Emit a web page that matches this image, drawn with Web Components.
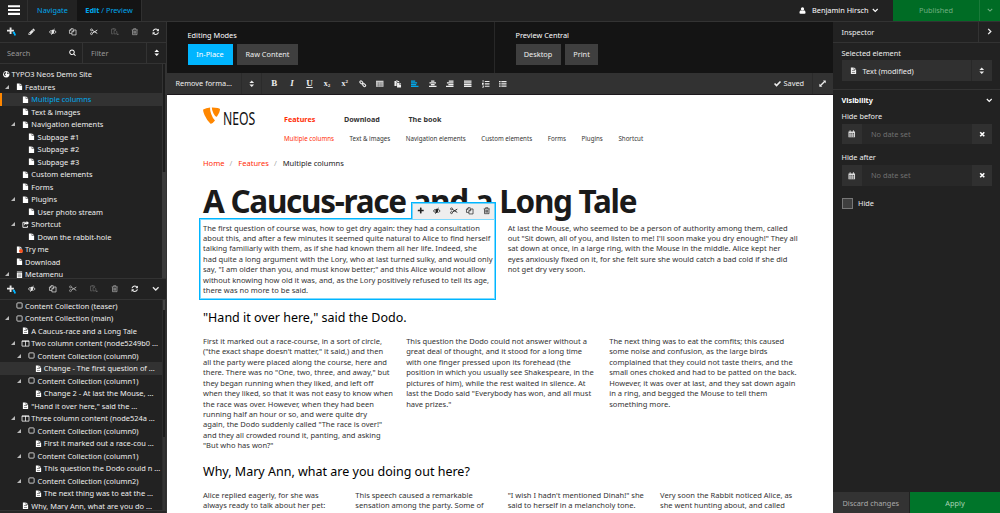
<!DOCTYPE html>
<html lang="en"><head><meta charset="utf-8"><title>Neos</title>
<style>
html,body{margin:0;height:100%;overflow:hidden;background:#222}
body{font-family:"Noto Sans","Open Sans",sans-serif;font-size:7.35px;color:#fff}
</style></head><body><neos-app></neos-app>
<script>
const I={
plus:'<path transform="scale(.00893)" d="M1600 736v192q0 40-28 68t-68 28h-416v416q0 40-28 68t-68 28h-192q-40 0-68-28t-28-68v-416h-416q-40 0-68-28t-28-68v-192q0-40 28-68t68-28h416v-416q0-40 28-68t68-28h192q40 0 68 28t28 68v416h416q40 0 68 28t28 68z"/>',
add:'<path d="M5 1h3.500v4H13v3.500H8.500V13H5V8.500H0V5h5z"/><path fill="#00b5ff" d="M11 9h4v3h1.500v4H13v-3.500h-2z"/>',
pencil:'<path transform="scale(.00893)" d="M491 1536l91-91-235-235-91 91v107h128v128h107zm469-1120l416 416-832 832h-416v-416zm683 96q0 53-37 90l-166 166-416-416 166-165q36-38 90-38 53 0 91 38l235 234q37 39 37 91z"/>',
eye:'<path fill-rule="evenodd" d="M0 8.500Q3 3.500 8 3.500T16 8.500Q13 13 8 13T0 8.500zM2 8.500Q4 11.500 6 11.700Q3.800 8 6.200 5Q3.500 6 2 8.500zM10 5Q12 7 10.600 10.200Q9 12 7.500 11.700Q12 12 14.200 8.500Q12.500 6 10 5z"/><path d="M11.500 1.500L5 14.500" stroke="currentColor" stroke-width="1.600"/>',
copy:'<path fill="none" stroke="currentColor" stroke-width="1.500" d="M6 11.500H1V5l3.500-3.500H9V4M1 5h3.500V1.500M6.200 8L10 4.200h5v10.600H6.200zM6.200 8H10V4.200"/>',
cut:'<g fill="none" stroke="currentColor"><circle cx="3.200" cy="4" r="2.100" stroke-width="1.600"/><circle cx="3.200" cy="12" r="2.100" stroke-width="1.600"/><path stroke-width="2" d="M5 5l10.500 6.500M5 11l10.500-6.500"/></g>',
paste:'<path fill-rule="evenodd" d="M1 2h3V.8h4V2h3v2.500H7L5.500 6v7H1zM4.500 2v1.300h3V2zM6.500 6H11v3.500h4V16H6.500zM12 5.500l3.300 3H12z"/>',
pasteoff:'<path fill="none" stroke="currentColor" stroke-width="1.600" d="M5 12.500H1.200V2.200H10V4.500M3.500 1.500h4M6.500 5.500H10l2.500 2.500v4.500h-6z"/><path d="M13 12h3v3h-3z"/>',
trash:'<path fill="none" stroke="currentColor" stroke-width="1.500" d="M1.500 4h13M3.200 4.500V14.200h9.600V4.500M5.500 3.500V1.500h5v2M6 6.500v5.500M8 6.500v5.500M10 6.500v5.500"/>',
refresh:'<path transform="scale(.00893)" d="M1639 1056q0 5-1 7-64 268-268 434.500t-478 166.500q-146 0-282.500-55t-243.500-157l-129 129q-19 19-45 19t-45-19-19-45v-448q0-26 19-45t45-19h448q26 0 45 19t19 45-19 45l-137 137q71 66 161 102t187 36q134 0 250-65t186-179q11-17 53-117 8-23 30-23h192q13 0 22.500 9.500t9.500 22.500zm25-800v448q0 26-19 45t-45 19h-448q-26 0-45-19t-19-45 19-45l138-138q-148-137-349-137-134 0-250 65t-186 179q-11 17-53 117-8 23-30 23h-199q-13 0-22.500-9.500t-9.500-22.500v-7q65-268 270-434.500t480-166.500q146 0 284 55.500t245 156.500l130-129q19-19 45-19t45 19 19 45z"/>',
search:'<path transform="scale(.00893)" d="M1216 832q0-185-131.500-316.500t-316.500-131.500-316.500 131.500-131.500 316.500 131.500 316.500 316.500 131.500 316.500-131.500 131.500-316.500zm512 832q0 52-38 90t-90 38q-54 0-90-38l-343-342q-179 124-399 124-143 0-273.500-55.500t-225-150-150-225-55.500-273.500 55.500-273.500 150-225 225-150 273.500-55.500 273.500 55.500 225 150 150 225 55.500 273.500q0 220-124 399l343 343q37 37 37 90z"/>',
sort:'<path d="M3 6.500L8 1l5 5.500zM3 9.500h10L8 15z"/>',
down:'<path fill="none" stroke="currentColor" stroke-width="2.800" d="M2 5l6 5.800L14 5"/>',
right:'<path fill="none" stroke="currentColor" stroke-width="3" d="M5 2l6 6-6 6"/>',
user:'<circle cx="8" cy="4.600" r="3.800"/><path d="M4.500 7.500Q8 10 11.500 7.500Q15 8 15 13Q15 15.500 12.500 15.500h-9Q1 15.500 1 13Q1 8 4.500 7.500z"/>',
menu:'<path d="M0 1.500h16v2.800H0zM0 6.600h16v2.800H0zM0 11.700h16v2.800H0z"/>',
file:'<path d="M2 1h6.500v5H14v10H2zM9.500 1L14 5H9.500z"/>',
text:'<path fill-rule="evenodd" d="M2 1h6.500v5H14v10H2zM9.500 1L14 5H9.500zM4.500 8v1.200h7V8zM4.500 11.500v1.200h7v-1.200z"/>',
folder:'<path d="M2 1h12v1.700H2zM2 4h12v12H2z"/><path stroke="#222" stroke-width=".9" d="M4 7h8M4 10h8M4 13h8"/>',
globe:'<path fill-rule="evenodd" d="M8 0a8 8 0 1 0 .01 0zM3 4l3-1.500 2 1.500-2 2.500H4L5 9l2 1-1 3Q2 11 2 7zM11 3q3 1 3 4l-2 1-2-2z"/>',
square:'<rect x="2" y="2" width="12" height="12" rx="2" fill="none" stroke="currentColor" stroke-width="1.700"/>',
cols:'<path fill="none" stroke="currentColor" stroke-width="1.700" d="M0 2h16v12H0zM8 2v12M0 3h16"/>',
share:'<path fill="none" stroke="currentColor" stroke-width="2" d="M8 3H2v11.500h10.500V11"/><path d="M10.500 0L16 4.500 10.500 9V6.500Q6 6.500 5.500 10.500Q3 3 10.500 3z"/>',
link:'<g fill="none" stroke="currentColor" stroke-width="2.400"><rect x="-3.500" y="-2.300" width="7" height="4.600" rx="2" transform="translate(5 5) rotate(45)"/><rect x="-3.500" y="-2.300" width="7" height="4.600" rx="2" transform="translate(11 11) rotate(45)"/></g>',
table:'<path fill="#ccc" d="M0 1.500h16v13H0z"/><path stroke="#555" stroke-width=".8" d="M1 6h14M1 9h14M1 12h14M5.500 5v9M10.500 5v9"/>',
left:'<path d="M0 1h9v2.600H0zM0 4.800h13v2.600H0zM0 8.600h11v2.600H0zM0 12.400h16V15H0z"/>',
center:'<path d="M4.500 1h7v2.600h-7zM1 4.800h14v2.600H1zM4 8.600h8v2.600H4zM0 12.400h16V15H0z"/>',
rightal:'<path d="M6 1h10v2.600H6zM2 4.800h14v2.600H2zM5 8.600h11v2.600H5zM0 12.400h16V15H0z"/>',
justify:'<path d="M0 1h16v2.600H0zM0 4.800h16v2.600H0zM0 8.600h16v2.600H0zM0 12.400h16V15H0z"/>',
ol:'<path d="M6 2h10v2.400H6zM6 7h10v2.400H6zM6 12h10v2.400H6zM1.500 0H3v4.500H1.500zM0 6h4v1.500L2 9h2v1H0zM0 11.500h4V16H0v-1h2.500v-.7H1v-1h1.500v-.8H0z"/>',
ul:'<path d="M5 2h11v2.700H5zM5 6.800h11v2.700H5zM5 11.600h11v2.700H5zM0 2h3.500v2.700H0zM0 6.800h3.500v2.700H0zM0 11.600h3.500v2.700H0z"/>',
check:'<path fill="none" stroke="currentColor" stroke-width="3.800" d="M1.300 8l4.500 4.500L14.800 3.500"/>',
expand:'<path d="M9 1h6.500v6.500L13.300 5.300 5.200 13 7.500 15.500H.8V8.700L3 11 11.200 3z"/>',
cal:'<path fill-rule="evenodd" d="M1 3h2.500V.5h2V3h5V.5h2V3H15v12.500H1zM3 7v1.500h2.500V7zM6.800 7v1.500h2.500V7zM10.500 7v1.500H13V7zM3 9.700v1.500h2.500V9.700zM6.800 9.700v1.500h2.500V9.700zM10.500 9.700v1.500H13V9.700zM3 12.500v1.300h2.500v-1.300zM6.800 12.500v1.300h2.500v-1.300zM10.500 12.500v1.300H13v-1.300z"/>',
x:'<path fill="none" stroke="currentColor" stroke-width="4" d="M3 3l10 10M13 3L3 13"/>'};
const def=(n,css,html)=>customElements.define(n,class extends HTMLElement{connectedCallback(){
 if(this.shadowRoot)return;
 this.attachShadow({mode:'open'}).innerHTML=`<style>*{box-sizing:border-box}${css}</style>${typeof html=='function'?html(this):html}`}});
const ic=(n,s=7.5,c='')=>`<neos-icon name="${n}" size="${s}"${c?` style="color:${c}"`:''}></neos-icon>`;

def('neos-icon',`:host{display:inline-flex;flex:none}svg{display:block;fill:currentColor;overflow:visible}`,
 e=>{const s=e.getAttribute('size')||8;return `<svg width="${s}" height="${s}" viewBox="0 0 16 16">${I[e.getAttribute('name')]}</svg>`});

def('neos-header',`:host{display:flex;height:21.500px;background:#222;border-bottom:1px solid #333;align-items:stretch}
div{display:flex;align-items:center;justify-content:center}
.m{width:28px;border-right:1px solid #303030}.n{width:49px;color:#00a8ec}.e{width:65px;background:#141414;color:#00a8ec;border-right:1px solid #303030;white-space:pre}
.s{flex:1}.u{gap:6px;width:94px;justify-content:flex-start}.p{width:86px;background:#006c25;color:#6fae80}.d{width:21px;background:#006c25;border-left:1px solid #1a7a3a;color:#6fae80}`,
`<div class="m">${ic('menu',12)}</div><div class="n">Navigate</div><div class="e"><b>Edit</b> / Preview</div><div class="s"></div>
<div class="u">${ic('user',7)}<span>Benjamin Hirsch</span><neos-icon name="down" size="6.500" style="margin-left:-2.500px"></neos-icon></div><div class="p">Published</div><div class="d">${ic('down',6)}</div>`);

def('icon-bar',`:host{display:flex;height:21px;flex:none;align-items:center;padding-left:1px;color:#e8e8e8;border-bottom:1px solid #333}
div{width:20.700px;display:flex;justify-content:center}.off{color:#666}.mid{color:#aaa}`,
 e=>e.getAttribute('icons').split(' ').map(n=>`<div class="${n=='pasteoff'?'off':n=='trash'||(n=='cut'&&e.hasAttribute('dim'))?'mid':''}">${ic(n,n=='add'?8.5:7.5)}</div>`).join(''));

def('tree-row',`:host{display:flex;align-items:center;height:12.500px;width:162px;white-space:pre;color:#eee;flex:none;font-size:7.430px}
:host([on]){background:#323232}:host([current]){box-shadow:inset 2px 0 #ff8700;color:#00a8ec}
.a{display:flex;justify-content:flex-end;width:var(--w);flex:none}.a i{border:solid transparent;border-width:0 0 4px 4px;border-bottom-color:#bbb;width:0;margin-right:4.700px}
span{margin:0 2.300px 0 2.600px;display:flex;position:relative;color:#fff}b{position:absolute;left:3px;top:3px;width:4.500px;height:4.500px;border-radius:50%;background:#f4511e}`,
 e=>{const l=+e.getAttribute('level'),g=e.getAttribute('icon');return `<div class="a" style="--w:${l?l*6.25+6.95:.2}px">${e.hasAttribute('open')?'<i></i>':''}</div><span>${ic(g,g=='globe'?6.5:7)}${e.hasAttribute('hot')?'<b></b>':''}</span><slot></slot>`});

const rows=a=>a.map(([l,i,t,x=''])=>`<tree-row level="${l}" icon="${i}" ${x}>${t}</tree-row>`).join('');
const T1=[[0,'globe','TYPO3 Neos Demo Site'],[1,'file','Features','open'],[2,'file','Multiple columns','on current'],[2,'file','Text &amp; images'],[2,'file','Navigation elements','open'],[3,'file','Subpage #1'],[3,'file','Subpage #2'],[3,'file','Subpage #3'],[2,'file','Custom elements'],[2,'file','Forms'],[2,'file','Plugins','open'],[3,'file','User photo stream'],[2,'share','Shortcut','open'],[3,'file','Down the rabbit-hole'],[1,'file','Try me','hot'],[1,'file','Download'],[1,'folder','Metamenu','open']];
const T2=[[1,'square','Content Collection (teaser)'],[1,'square','Content Collection (main)','open'],[2,'text','A Caucus-race and a Long Tale'],[2,'cols','Two column content (node5249b0 ...','open'],[3,'square','Content Collection (column0)','open'],[4,'text','Change - The first question of ...','on'],[3,'square','Content Collection (column1)','open'],[4,'text','Change 2 - At last the Mouse, ...'],[2,'text','"Hand it over here," said the ...'],[2,'cols','Three column content (node524a ...','open'],[3,'square','Content Collection (column0)','open'],[4,'text','First it marked out a race-cou ...'],[3,'square','Content Collection (column1)','open'],[4,'text','This question the Dodo could n ...'],[3,'square','Content Collection (column2)','open'],[4,'text','The next thing was to eat the ...'],[2,'text','Why, Mary Ann, what are you do ...']];

def('neos-sidebar',`:host{display:flex;flex-direction:column;width:167px;flex:none;background:#222;border-right:1px solid #333;overflow:hidden}
.s{display:flex;height:21.500px;border-bottom:1px solid #333;align-items:center;flex:none;color:#999}.s div{display:flex;align-items:center;height:100%}
.q{width:83px;padding:0 6px 0 7px;justify-content:space-between;border-right:1px solid #333}.f{width:64px;padding-left:8px;border-right:1px solid #333}.o{flex:1;justify-content:center;color:#fff}
.t{display:flex;overflow:hidden;flex:none}.r{width:162px;padding-top:4px;flex:none}.bar{flex:1;background:#3a3a3a}.bar i{display:block;background:#1c1c1c}`,
`<icon-bar icons="add pencil eye copy cut pasteoff trash refresh"></icon-bar>
<div class="s"><div class="q">Search${ic('search',7,'#fff')}</div><div class="f">Filter</div><div class="o">${ic('sort',7.5)}</div></div>
<div class="t" style="height:214px"><div class="r">${rows(T1)}</div><div class="bar"><i style="height:108px;border:solid #333;border-width:0 1px"></i></div></div>
<icon-bar style="border-top:1px solid #333;height:22px" dim icons="add eye copy cut pasteoff trash refresh down"></icon-bar>
<div class="t" style="height:210px"><div class="r" style="padding-top:0;margin-top:-.5px">${rows(T2)}</div><div class="bar" style="background:#1c1c1c;border:solid #2d2d2d;border-width:0 1px"><i style="height:10px;background:#444"></i><i style="height:127px"></i><i style="height:73px;background:#333"></i></div></div>
<div style="height:3px;flex:none;border-top:1px solid #333;background:#262626"></div>`);

def('mode-button',`:host{display:flex;align-items:center;justify-content:center;height:21px;background:#3f3f3f;color:#eee}:host([on]){background:#00b5ff;color:#fff}`,'<slot></slot>');
def('mode-panel',`:host{display:flex;height:51.500px;flex:none;background:#141414}.c{padding:8.500px 0 0 20.500px;line-height:10px;width:327px;flex:none}.c+.c{border-left:1px solid #282828;flex:1}.b{display:flex;gap:4.500px;margin-top:3.500px}`,
`<div class="c">Editing Modes<div class="b"><mode-button on style="width:45px">In-Place</mode-button><mode-button style="width:61px">Raw Content</mode-button></div></div>
<div class="c">Preview Central<div class="b"><mode-button style="width:45px">Desktop</mode-button><mode-button style="width:33px">Print</mode-button></div></div>`);
def('format-bar',`:host{display:flex;height:21.500px;flex:none;background:#323232;border-bottom:1.500px solid #1c181c;align-items:center;color:#eee}
.f{width:75px;padding-left:8.500px;height:100%;display:flex;align-items:center;border-right:1px solid #2b2b2b}.o{width:20px;display:flex;justify-content:center;height:100%;align-items:center;border-right:1px solid #2b2b2b;margin-right:3.500px}
.i{width:17.600px;display:flex;justify-content:center;align-items:center;font:bold 9px "Liberation Serif",serif}.x{font-size:8px}.i small{font-size:5px}.s{flex:1}.v{display:flex;align-items:center;gap:2.500px;width:37.500px}.e{width:21.500px;height:100%;display:flex;align-items:center;justify-content:center;border-left:1px solid #2b2b2b}`,
`<div class="f">Remove forma...</div><div class="o">${ic('sort',7.5)}</div>
<div class="i">B</div><div class="i"><i>I</i></div><div class="i"><u>U</u></div><div class="i x">x<small style="align-self:flex-end">2</small></div><div class="i x">x<small style="align-self:flex-start">2</small></div>
${['link','table','paste','left','center','rightal','justify','ol','ul'].map(n=>`<div class="i">${ic(n,7.5,n=='left'?'#00a8ec':'')}</div>`).join('')}
<div class="s"></div><div class="v">${ic('check',7)}<span>Saved</span></div><div class="e">${ic('expand',7)}</div>`);

def('site-nav',`:host{display:flex;height:50.500px}
.logo{width:81px;display:flex;padding-top:.5px}.w{font-size:17.700px;line-height:24px;color:#111;transform:scaleX(.69);transform-origin:0 50%;margin:-1.500px 0 0 1.500px;height:24px}
.m{display:flex;gap:28.600px;font-size:7.200px;font-weight:bold;line-height:12px;padding-top:6px;color:#333}.n{display:flex;gap:15.600px;font-size:6.180px;line-height:10px;margin-top:9.800px;color:#333;white-space:nowrap}.r{color:#ff2d06}`,
`<div class="logo"><svg width="18" height="18" viewBox="0 0 18 18"><path fill="#ff8700" d="M.2 2.500Q3 1 7.200.6Q6.800 3 8.200 7Q10 12 12 13.500Q9 17.500 7.300 16.500Q4 13.500 1.500 8Q-.2 4 .2 2.500zM8.800.4Q16 .3 17 2Q17 5 14 9.500Q12.500 10.500 10.500 6.500Q8.800 3 8.800.4z"/></svg><div class="w">NEOS</div></div>
<div><div class="m"><span class="r">Features</span><span>Download</span><span>The book</span></div><div class="n"><span class="r">Multiple columns</span><span>Text &amp; images</span><span>Navigation elements</span><span>Custom elements</span><span>Forms</span><span>Plugins</span><span>Shortcut</span></div></div>`);
def('text-columns',`:host{display:grid;grid-auto-flow:column;grid-auto-columns:1fr;width:609.400px;white-space:nowrap;line-height:10.417px;color:#333}`,'<slot></slot>');
def('edit-box',`:host{display:block;position:relative}.o{position:absolute;left:-4.500px;top:-4.500px;width:297.500px;height:82px;border:1px solid #00b5ff;box-shadow:inset 0 0 0 1px #00b5ff80}
.t{position:absolute;left:208px;top:-21px;width:85px;height:17.500px;background:#eee;border:solid #00b5ff;border-width:1px 1px 0 1px;box-shadow:inset 1px 1px #00b5ff80,inset -1px 0 #00b5ff80;display:flex;align-items:center;justify-content:space-around;color:#222}`,
`<slot></slot><div class="o"></div><div class="t">${['plus','eye','cut','copy','trash'].map(n=>ic(n,7.5)).join('')}</div>`);
def('site-page',`:host{display:block;flex:1;background:#fff;color:#222;overflow:hidden;padding:12px 0 0 36px;font-size:7.550px}
.bc{display:flex;margin-top:0;line-height:12px;white-space:pre}.bc a{color:#ff2d06}.bc i{color:#aaa;font-style:normal;margin:0 6px 0 5px}
h1{font-size:31.500px;line-height:40px;margin:11.500px 0 0;height:42px;color:#1a1a1a;letter-spacing:-1.300px;white-space:nowrap}h2{font-weight:normal;font-size:12.500px;line-height:18px;color:#000;margin:0;white-space:nowrap}`,
`<site-nav></site-nav><div class="bc"><a>Home</a><i>/</i><a>Features</a><i>/</i><span>Multiple columns</span></div><h1>A Caucus-race and a Long Tale</h1>
<text-columns style="height:86px"><edit-box>The first question of course was, how to get dry again: they had a consultation<br>about this, and after a few minutes it seemed quite natural to Alice to find herself<br>talking familiarly with them, as if she had known them all her life. Indeed, she<br>had quite a long argument with the Lory, who at last turned sulky, and would only<br>say, "I am older than you, and must know better;" and this Alice would not allow<br>without knowing how old it was, and, as the Lory positively refused to tell its age,<br>there was no more to be said.</edit-box>
<div>At last the Mouse, who seemed to be a person of authority among them, called<br>out "Sit down, all of you, and listen to me! I'll soon make you dry enough!" They all<br>sat down at once, in a large ring, with the Mouse in the middle. Alice kept her<br>eyes anxiously fixed on it, for she felt sure she would catch a bad cold if she did<br>not get dry very soon.</div></text-columns>
<h2>"Hand it over here," said the Dodo.</h2>
<text-columns style="margin-top:9.500px;height:126.500px"><div>First it marked out a race-course, in a sort of circle,<br>("the exact shape doesn't matter," it said,) and then<br>all the party were placed along the course, here and<br>there. There was no "One, two, three, and away," but<br>they began running when they liked, and left off<br>when they liked, so that it was not easy to know when<br>the race was over. However, when they had been<br>running half an hour or so, and were quite dry<br>again, the Dodo suddenly called "The race is over!"<br>and they all crowded round it, panting, and asking<br>"But who has won?"</div>
<div>This question the Dodo could not answer without a<br>great deal of thought, and it stood for a long time<br>with one finger pressed upon its forehead (the<br>position in which you usually see Shakespeare, in the<br>pictures of him), while the rest waited in silence. At<br>last the Dodo said "Everybody has won, and all must<br>have prizes."</div>
<div>The next thing was to eat the comfits; this caused<br>some noise and confusion, as the large birds<br>complained that they could not taste theirs, and the<br>small ones choked and had to be patted on the back.<br>However, it was over at last, and they sat down again<br>in a ring, and begged the Mouse to tell them<br>something more.</div></text-columns>
<h2>Why, Mary Ann, what are you doing out here?</h2>
<text-columns style="margin-top:9.500px"><div>Alice replied eagerly, for she was<br>always ready to talk about her pet:<br>"Dinah's our cat. And she's such a</div><div>This speech caused a remarkable<br>sensation among the party. Some of<br>the birds hurried off at once: one old</div><div>"I wish I hadn't mentioned Dinah!" she<br>said to herself in a melancholy tone.<br>"Nobody seems to like her, down here,</div><div>Very soon the Rabbit noticed Alice, as<br>she went hunting about, and called<br>out to her in an angry tone, "Why,</div></text-columns>`);

def('date-field',`:host{display:flex;width:150.500px;height:20.500px;background:#282828;color:#777}div{display:flex;align-items:center;justify-content:center;background:#303030;width:20.500px;color:#ddd}.m{flex:1;background:none;justify-content:flex-start;padding-left:9px;color:#707070}`,
`<div>${ic('cal',7.5)}</div><div class="m"><slot></slot></div><div style="color:#fff">${ic('x',6.5)}</div>`);
def('neos-inspector',`:host{display:flex;flex-direction:column;width:167px;flex:none;background:#222;color:#eee}
.h{height:21px;display:flex;align-items:center;border-bottom:1px solid #333;padding-left:8.500px;justify-content:space-between}.h div{width:22px;height:100%;display:flex;align-items:center;justify-content:center;border-left:1px solid #333}
.b{padding-left:8.500px;line-height:10px}.sel{display:flex;align-items:center;width:150.500px;height:20.500px;background:#303030;margin-top:2.800px}.sel span{flex:1}.sel div{width:21px;height:100%;display:flex;align-items:center;justify-content:center;border-left:1px solid #282828}
.v{display:flex;justify-content:space-between;padding-right:7.500px;align-items:center;height:10px}.f{margin-top:auto;display:flex;height:21px;gap:1.500px}.f div{display:flex;align-items:center;justify-content:center}
.k{display:flex;align-items:center;gap:5px;margin-top:12px}.k i{width:11.500px;height:11.500px;background:#3f3f3f;border:1px solid #777}`,
`<div class="h">Inspector<div>${ic('right',7)}</div></div>
<div class="b" style="padding-top:5px;height:47.500px;border-bottom:1px solid #333">Selected element<div class="sel"><neos-icon name="text" size="7" style="margin:0 6px 0 8px"></neos-icon><span>Text (modified)</span><div>${ic('sort',7.5)}</div></div></div>
<div class="b" style="padding-top:5px"><div class="v" style="color:#fff"><b>Visibility</b>${ic('down',6.5)}</div>
<div style="margin-top:5.500px">Hide before</div><date-field style="margin-top:3px">No date set</date-field>
<div style="margin-top:8px">Hide after</div><date-field style="margin-top:3px">No date set</date-field><div class="k"><i></i>Hide</div></div>
<div class="f"><div style="width:75.500px;background:#333;color:#aaa">Discard changes</div><div style="flex:1;background:#00752a;color:#a9d3b4">Apply</div></div>`);
def('neos-app',`:host{display:flex;flex-direction:column;width:1000px;height:513px;background:#222}.m{display:flex;height:491.500px}.c{flex:1;min-width:0;display:flex;flex-direction:column}`,
`<neos-header></neos-header><div class="m"><neos-sidebar></neos-sidebar><div class="c"><mode-panel></mode-panel><format-bar></format-bar><site-page></site-page></div><neos-inspector></neos-inspector></div>`);
</script></body></html>
